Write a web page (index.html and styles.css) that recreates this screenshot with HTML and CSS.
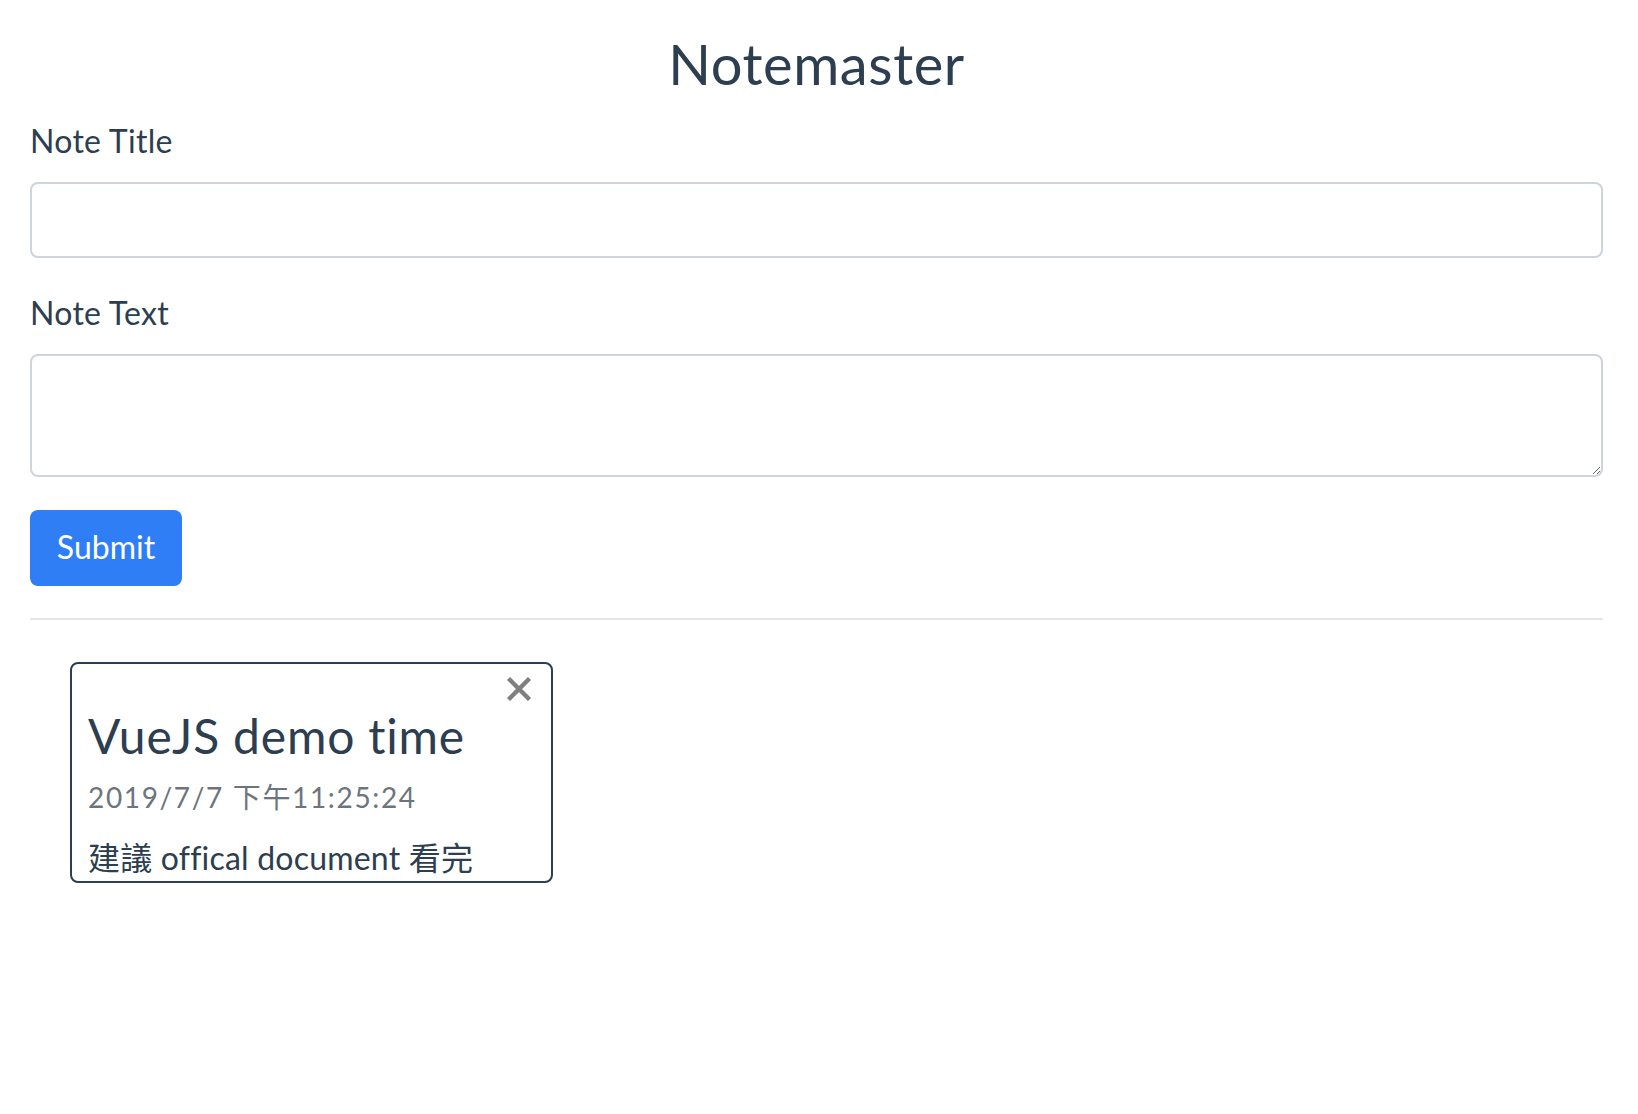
FILE: index.html
```html
<!DOCTYPE html>
<html lang="zh-Hant">
<head>
<meta charset="utf-8">
<title>Notemaster</title>
<link rel="stylesheet" href="styles.css">
</head>
<body>
<div class="app">
  <h1 class="app-title">Notemaster</h1>
  <form class="note-form">
    <div class="form-group form-group-title">
      <label class="form-label" for="title">Note Title</label>
      <input class="form-input" id="title" type="text">
    </div>
    <div class="form-group form-group-text">
      <label class="form-label label-text" for="text">Note Text</label>
      <textarea class="form-input form-textarea" id="text"></textarea>
    </div>
    <button class="btn-submit" type="button">Submit</button>
  </form>
  <hr class="divider">
  <div class="notes">
    <div class="note-card">
      <button class="close-btn" type="button" aria-label="Close">
        <svg width="26" height="24" viewBox="0 0 26 24"><path d="M2.5 1.5 L23.5 22.5 M23.5 1.5 L2.5 22.5" stroke="#808080" stroke-width="4.4" stroke-linecap="butt"/></svg>
      </button>
      <h4 class="note-title">VueJS demo time</h4>
      <div class="note-date">2019/7/7 下午11:25:24</div>
      <p class="note-text">建議 offical document 看完</p>
    </div>
  </div>
</div>
</body>
</html>
```
FILE: styles.css
```css
html, body {
  margin: 0;
  padding: 0;
  background: #ffffff;
}
body {
  font-family: "Lato", "Noto Sans CJK TC", sans-serif;
  color: #2c3e50;
}
.app {
  padding: 30px 35px 0 30px;
}
.app-title {
  margin: 0 0 20px;
  font-size: 56px;
  line-height: 67px;
  font-weight: 400;
  letter-spacing: 0.6px;
  text-align: center;
}
.note-form {
  display: flex;
  flex-direction: column;
  align-items: flex-start;
}
.form-group {
  display: flex;
  flex-direction: column;
  width: 100%;
}
.form-group-title {
  margin-bottom: 31px;
}
.form-group-text {
  margin-bottom: 33px;
}
.form-label {
  font-size: 32px;
  line-height: 48px;
  margin-bottom: 17px;
  letter-spacing: 0.3px;
}
.label-text {
  margin-bottom: 17px;
}
.form-input {
  box-sizing: border-box;
  width: 100%;
  height: 76px;
  border: 2px solid #ced4da;
  border-radius: 8px;
  background: #fff;
  font-family: inherit;
  font-size: 32px;
  color: #495057;
  padding: 10px 24px;
  outline: none;
}
.form-textarea {
  height: 123px;
  resize: vertical;
}
.btn-submit {
  box-sizing: border-box;
  width: 152px;
  height: 76px;
  border: none;
  border-radius: 8px;
  background: #2f7ef6;
  color: #ffffff;
  font-family: inherit;
  font-size: 32px;
  line-height: 48px;
  padding: 0 0 2px;
  cursor: pointer;
}
.divider {
  margin: 32px 0 0;
  border: none;
  height: 2px;
  background: #e6e6e6;
}
.notes {
  display: flex;
  padding: 42px 0 0 40px;
}
.note-card {
  position: relative;
  box-sizing: border-box;
  width: 483px;
  height: 221px;
  border: 2px solid #2c3e50;
  border-radius: 8px;
  padding: 43px 16px 0;
}
.close-btn {
  position: absolute;
  top: 13px;
  right: 19px;
  border: none;
  background: none;
  padding: 0;
  line-height: 0;
  cursor: pointer;
}
.note-title {
  margin: 0 0 11px;
  font-size: 48px;
  line-height: 58px;
  font-weight: 400;
  letter-spacing: 0.8px;
  white-space: nowrap;
}
.note-date {
  font-size: 28px;
  line-height: 42px;
  color: #6c757d;
  letter-spacing: 1.65px;
  margin-bottom: 16px;
  white-space: nowrap;
}
.note-text {
  margin: 0;
  font-size: 32px;
  line-height: 48px;
  letter-spacing: 0.2px;
  white-space: nowrap;
}
```
